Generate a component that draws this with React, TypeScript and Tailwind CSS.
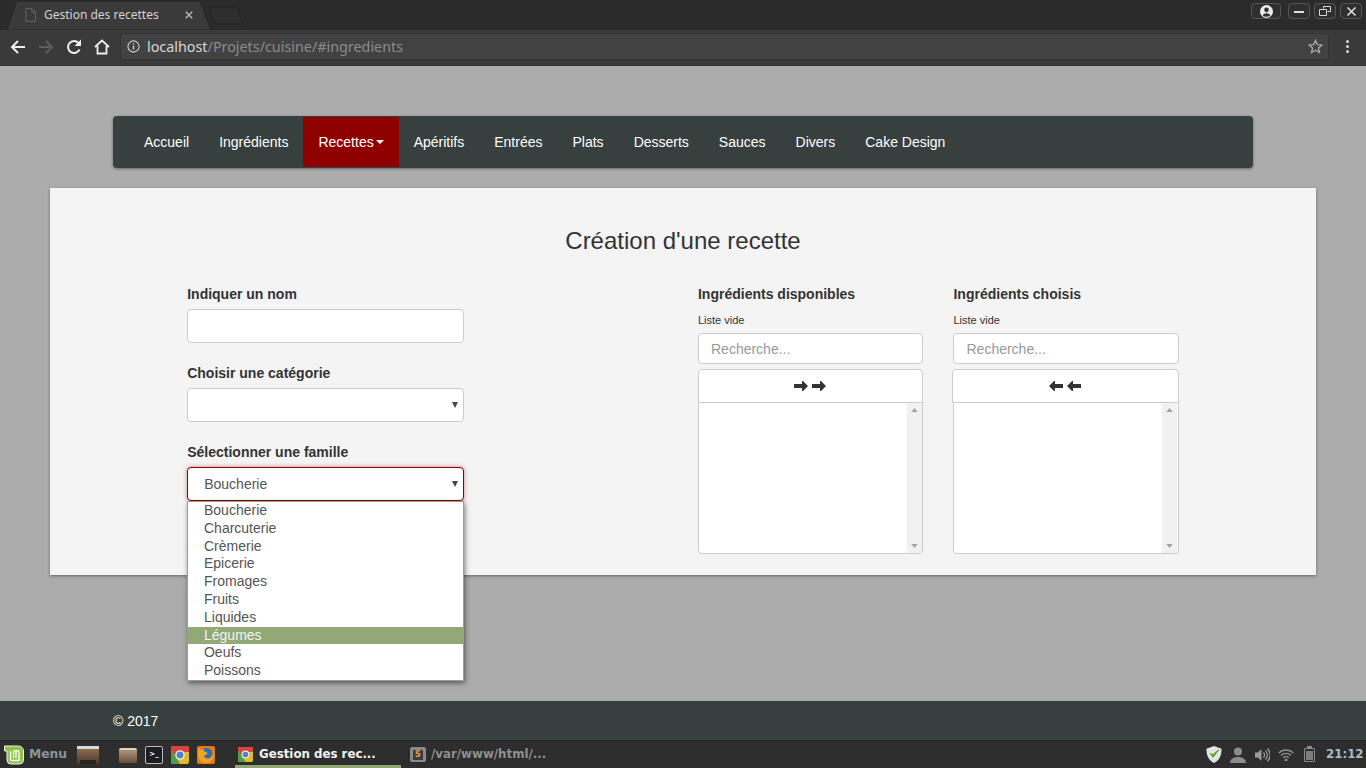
import React from "react";

const sans = "font-['Liberation_Sans',Arial,sans-serif]";

const NAV = ["Accueil", "Ingrédients", "Recettes", "Apéritifs", "Entrées", "Plats", "Desserts", "Sauces", "Divers", "Cake Design"];
const FAMILLES = ["Boucherie", "Charcuterie", "Crèmerie", "Epicerie", "Fromages", "Fruits", "Liquides", "Légumes", "Oeufs", "Poissons"];
const ROW_HEIGHTS = ["h-[18px]", "h-[18px]", "h-[17px]", "h-[18px]", "h-[18px]", "h-[18px]", "h-[18px]", "h-[17px]", "h-[18px]", "h-[18px]"];

const Caret = ({ className }: { className: string }) => (
  <svg viewBox="0 0 8 6" preserveAspectRatio="none" className={className} fill="currentColor">
    <path d="M0 0h8L4 6z" />
  </svg>
);

const TabStrip = () => (
  <div className="h-[30px] relative bg-[#2b2b2b] flex">
    <svg viewBox="0 0 240 30" className="absolute left-[5px] top-0 w-[240px] h-[30px]">
      <path d="M204 7 H232 L238 24 H210 Z" fill="#2e2e2e" stroke="#232323" strokeLinejoin="round" />
      <path d="M2 30 L11 3 Q12 1 14 1 L193 1 Q195 1 196 3 L206 30 Z" fill="#3a3a3a" stroke="#242424" />
    </svg>
    <div className="relative flex items-center h-full pl-[25px] w-[205px]">
      <svg viewBox="0 0 12 15" className="w-[11px] h-[14px] shrink-0" fill="none" stroke="#686868">
        <path d="M1 .5h6.500l4 4v10h-10.500zM7.500 .5v4h4" />
      </svg>
      <span className="ml-[8px] text-[12px] text-[#d2d2d2] font-['Noto_Sans',sans-serif]">Gestion des recettes</span>
      <svg viewBox="0 0 10 10" className="absolute left-[185px] top-[11px] w-[8px] h-[8px]" stroke="#b0b0b0" strokeWidth="2">
        <path d="M1 1l8 8M9 1l-8 8" />
      </svg>
    </div>
    <div className="ml-auto flex items-start gap-[4px] pt-[3px] pr-[4px]">
      <div className="mr-[3px] w-[30px] h-[16px] rounded-sm border border-[#555] bg-[#2f2f2f] flex items-center justify-center">
        <svg viewBox="0 0 14 14" className="w-[13px] h-[13px]">
          <circle cx="7" cy="7" r="7" fill="#ececec" />
          <circle cx="7" cy="5.200" r="2.500" fill="#2f2f2f" />
          <path d="M2.800 11a4.500 3.500 0 0 1 8.400 0a6 6 0 0 1-8.400 0z" fill="#2f2f2f" />
        </svg>
      </div>
      <div className="w-[22px] h-[16px] rounded-sm border border-[#555] bg-[#2f2f2f] flex items-center justify-center">
        <div className="w-[10px] h-[2px] bg-[#e0e0e0] mt-[2px]" />
      </div>
      <div className="w-[22px] h-[16px] rounded-sm border border-[#555] bg-[#2f2f2f] flex items-center justify-center">
        <svg viewBox="0 0 12 10" className="w-[12px] h-[10px]" fill="none" stroke="#d8d8d8">
          <path d="M4.500 2.500v-2h7v5h-3M.5 3.500h7v6h-7z" />
        </svg>
      </div>
      <div className="w-[22px] h-[16px] rounded-sm border border-[#555] bg-[#2f2f2f] flex items-center justify-center">
        <svg viewBox="0 0 10 10" className="w-[9px] h-[9px]" stroke="#e4e4e4" strokeWidth="1.600">
          <path d="M.5 .5l9 9M9.500 .5l-9 9" />
        </svg>
      </div>
    </div>
  </div>
);

const Toolbar = () => (
  <div className="h-[36px] bg-[#3a3a3a] flex items-center border-b border-[#333] pb-[2px]">
    <svg viewBox="0 0 16 16" className="ml-[10px] w-[16px] h-[16px]" fill="none" stroke="#efefef" strokeWidth="2">
      <path d="M15 8H2M8 2L2 8l6 6" />
    </svg>
    <svg viewBox="0 0 16 16" className="ml-[12px] w-[16px] h-[16px]" fill="none" stroke="#5e5e5e" strokeWidth="2">
      <path d="M1 8h13M8 2l6 6-6 6" />
    </svg>
    <svg viewBox="0 0 16 16" className="ml-[12px] w-[16px] h-[16px]" fill="none" stroke="#efefef" strokeWidth="2">
      <path d="M13.500 10.500A6 6 0 1 1 12.500 4" />
      <path d="M15 .5v6.500H8.500z" fill="#efefef" stroke="none" />
    </svg>
    <svg viewBox="0 0 16 16" className="ml-[12px] w-[16px] h-[16px]" fill="none" stroke="#efefef" strokeWidth="1.800">
      <path d="M1 8l7-6.500L15 8M3.500 7v7.500h9V7" />
    </svg>
    <div className="ml-[10px] w-[1209px] h-[27px] rounded-[3px] bg-[#424242] border border-[#333] flex items-center pl-[6px]">
      <svg viewBox="0 0 14 14" className="w-[13px] h-[13px] shrink-0" fill="none" stroke="#d0d0d0" strokeWidth="1.200">
        <circle cx="7" cy="7" r="6" />
        <path d="M7 6v4.200M7 3.500v1.300" strokeWidth="1.500" />
      </svg>
      <span className="ml-[7px] text-[14.33px] font-['Noto_Sans',sans-serif] text-[#d7d7d7]">
        localhost<span className="text-[#8b8b8b]">/Projets/cuisine/#ingredients</span>
      </span>
      <svg viewBox="0 0 16 16" className="ml-auto mr-[5px] w-[15px] h-[15px]" fill="none" stroke="#a8a8a8" strokeWidth="1.400">
        <path d="M8 1.500l2 4.400 4.800.5-3.600 3.200 1 4.700L8 11.900l-4.200 2.400 1-4.700L1.200 6.400 6 5.900z" />
      </svg>
    </div>
    <div className="ml-[17px] flex flex-col gap-[2px]">
      <div className="w-[3px] h-[3px] bg-[#d6d6d6] rounded-full" />
      <div className="w-[3px] h-[3px] bg-[#d6d6d6] rounded-full" />
      <div className="w-[3px] h-[3px] bg-[#d6d6d6] rounded-full" />
    </div>
  </div>
);

const NavBar = () => (
  <nav className="mx-[113px] mt-[50px] h-[52px] rounded-[4px] bg-[#373f3f] shadow-[0_1px_3px_rgba(0,0,0,0.4)] flex pl-[16px] pt-px pb-px text-[14px] text-white">
    {NAV.map((item) =>
      item === "Recettes" ? (
        <div key={item} className="px-[15px] bg-[#8f0000] flex items-center">
          {item}
          <Caret className="ml-[2px] w-[8px] h-[4px] text-white" />
        </div>
      ) : (
        <div key={item} className="px-[15px] flex items-center">{item}</div>
      )
    )}
  </nav>
);

const SelectBox = ({ value, focused }: { value?: string; focused?: boolean }) => (
  <div
    className={
      focused
        ? "h-[34px] rounded-[4px] bg-white border border-[#8f0000] shadow-[0_0_4px_rgba(143,0,0,0.45)] flex items-center pl-[16px] pr-[5px] text-[14px] text-[#555]"
        : "h-[34px] rounded-[4px] bg-white border border-[#ccc] flex items-center pl-[16px] pr-[5px] text-[14px] text-[#555]"
    }
  >
    {value}
    <Caret className="ml-auto w-[6px] h-[6px] text-[#444]" />
  </div>
);

const Arrow = ({ dir }: { dir: "in" | "out" }) => (
  <svg viewBox="0 0 14 10" className="w-[14px] h-[10px]" fill="#333">
    {dir === "in" ? (
      <path d="M0 3h8V0h1l5 5-5 5H8V7H0z" />
    ) : (
      <path d="M14 3H6V0H5L0 5l5 5h1V7h8z" />
    )}
  </svg>
);

const DualList = ({ title, dir, btnClass, barClass }: { title: string; dir: "in" | "out"; btnClass: string; barClass: string }) => (
  <div className="w-full">
    <label className="block h-[20px] leading-[20px] text-[14px] font-bold text-[#333]">{title}</label>
    <div className="mt-[7px] h-[19px] leading-[19px] text-[11px] text-[#333]">Liste vide</div>
    <div className="mt-[3px] h-[31px] rounded-[4px] bg-white border border-[#ccc] flex items-center pl-[12px] pt-px text-[14px] text-[#999]">
      Recherche...
    </div>
    <div className={btnClass}>
      <Arrow dir={dir} />
      <Arrow dir={dir} />
    </div>
    <div className="h-[151px] rounded-b-[4px] bg-white border border-t-0 border-[#ccc] flex justify-end">
      <div className={barClass}>
        <svg viewBox="0 0 8 5" className="w-[7px] h-[4px]" fill="#a3a3a3"><path d="M4 0l4 5H0z" /></svg>
        <svg viewBox="0 0 8 5" className="w-[7px] h-[4px]" fill="#a3a3a3"><path d="M0 0h8L4 5z" /></svg>
      </div>
    </div>
  </div>
);

const Panel = () => (
  <section className="relative mx-[50px] mt-[20px] h-[387px] bg-[#f4f4f4] shadow-[0_1px_3px_rgba(0,0,0,0.4)] pt-[36px]">
    <h1 className="text-center text-[24px] leading-[34px] text-[#333]">Création d'une recette</h1>
    <div className="mt-[26px] ml-[137.200px] flex">
      <div className="w-[277px]">
        <label className="block h-[20px] leading-[20px] text-[14px] font-bold text-[#333]">Indiquer un nom</label>
        <div className="mt-[5px] h-[34px] rounded-[4px] bg-white border border-[#ccc]" />
        <label className="block mt-[20px] h-[20px] leading-[20px] text-[14px] font-bold text-[#333]">Choisir une catégorie</label>
        <div className="mt-[5px]"><SelectBox /></div>
        <label className="block mt-[20px] h-[20px] leading-[20px] text-[14px] font-bold text-[#333]">Sélectionner une famille</label>
        <div className="mt-[5px] relative">
          <SelectBox value="Boucherie" focused />
          <ul className="absolute left-0 right-0 top-[34px] z-10 h-[180px] bg-white border border-[#9aa08e] shadow-[1px_2px_5px_rgba(0,0,0,0.5)] text-[14px] text-[#555]">
            {FAMILLES.map((f, i) => (
              <li
                key={f}
                className={
                  f === "Légumes"
                    ? `${ROW_HEIGHTS[i]} leading-[17px] pl-[15.800px] bg-[#92a876] text-[#f4f4f4]`
                    : `${ROW_HEIGHTS[i]} leading-[17px] pl-[15.800px]`
                }
              >
                {f}
              </li>
            ))}
          </ul>
        </div>
      </div>
      <div className="ml-[233.800px] w-[225px]">
        <DualList
          title="Ingrédients disponibles"
          dir="in"
          btnClass="mt-[5px] h-[34px] rounded-t-[4px] bg-white border border-[#ccc] flex items-center justify-center gap-[4px]"
          barClass="w-[15px] h-full bg-[#f1f1f1] flex flex-col items-center justify-between py-[5px]"
        />
      </div>
      <div className="ml-[30.500px] w-[225.500px]">
        <DualList
          title="Ingrédients choisis"
          dir="out"
          btnClass="mt-[5px] -ml-[1.500px] h-[34px] rounded-t-[4px] bg-white border border-[#ccc] flex items-center justify-center gap-[4px]"
          barClass="w-[15px] mr-px h-full bg-[#f1f1f1] flex flex-col items-center justify-between py-[5px]"
        />
      </div>
    </div>
  </section>
);

const ChromeLogo = ({ className }: { className: string }) => (
  <svg viewBox="0 0 18 18" className={className}>
    <rect width="18" height="18" fill="#e2b92e" rx="2" />
    <path d="M0 2a2 2 0 0 1 2-2h14a2 2 0 0 1 2 2v4H9L5 11 0 5z" fill="#d8443a" />
    <path d="M0 5l5 6 4 7H2a2 2 0 0 1-2-2z" fill="#4aa04a" />
    <circle cx="9" cy="9" r="4.800" fill="#ececec" />
    <circle cx="9" cy="9" r="3.400" fill="#4a86c8" />
  </svg>
);

const Taskbar = () => (
  <div className="h-[28px] bg-[#2d2d2d] border-t border-[#222] flex items-center font-['DejaVu_Sans',sans-serif] text-[11.800px] font-bold">
    <svg viewBox="0 0 20 20" className="ml-[4px] w-[20px] h-[20px] shrink-0">
      <path d="M.5 1h14a5 5 0 0 1 5 5v9a4 4 0 0 1-4 4H7a4 4 0 0 1-4-4V6H.5z" fill="#8fc449" stroke="#eef3e4" strokeWidth="1" />
      <path d="M6.500 6v8a1.500 1.500 0 0 0 1.500 1.500h7V7a1.500 1.500 0 0 0-3 0v6M9.500 13V7a1.500 1.500 0 0 1 2.500-1" fill="none" stroke="#fff" strokeWidth="1.300" />
    </svg>
    <span className="ml-[5px] w-[37px] whitespace-nowrap text-[12.300px] text-[#8a949c]">Menu</span>
    <div className="ml-[11px] w-[22px] h-[18px] bg-gradient-to-b from-[#8a6a50] to-[#4d3a2c] border-t-[3px] border-[#d8d8d8] flex items-end justify-center">
      <div className="w-[16px] h-[4px] bg-[#2c2420]" />
    </div>
    <div className="ml-[20px] w-[18px] h-[15px] mt-[2px] rounded-[2px] bg-gradient-to-b from-[#b09478] to-[#6b503c] border-t-2 border-[#d8d4cc]" />
    <div className="ml-[8px] w-[18px] h-[18px] rounded-[2px] bg-[#1c1c24] border border-[#bbb] flex items-center justify-center text-[7px] leading-none text-white">&gt;_</div>
    <ChromeLogo className="ml-[8px] w-[18px] h-[18px] shrink-0" />
    <svg viewBox="0 0 18 18" className="ml-[8px] w-[18px] h-[18px] shrink-0">
      <rect width="18" height="18" rx="2" fill="#e27a1c" />
      <circle cx="9.500" cy="8" r="6" fill="#2c6fb0" />
      <path d="M2 2c1 2 3 2 5 1-1 2 1 3 3 3 1 2-1 4-3 3 0 3 4 5 7 2 1-1 2-3 2-5 2 5-1 11-7 11-5 0-8-4-8-8 0-3 0-5 1-7z" fill="#f0a324" />
    </svg>
    <div className="ml-[20px] w-[166px] h-full flex items-center pl-[3px] pt-[3px] border-b-[3px] border-[#91a574] shrink-0">
      <ChromeLogo className="w-[15px] h-[15px] shrink-0" />
      <span className="ml-[6px] whitespace-nowrap text-[#f2f2f2]">Gestion des rec...</span>
    </div>
    <div className="ml-[9px] w-[16px] h-[15px] bg-[#8a8a8a] rounded-[2px] flex items-center justify-center shrink-0">
      <div className="w-[10px] h-[10px] bg-[#3c3c3c] text-[8px] leading-[10px] text-center text-[#e29a4a]">S</div>
    </div>
    <span className="ml-[5px] whitespace-nowrap text-[#8f8f8f]">/var/www/html/...</span>
    <div className="ml-auto flex items-center">
      <svg viewBox="0 0 16 18" className="w-[16px] h-[17px]">
        <path d="M8 0l8 3c0 7-2 12-8 15C2 15 0 10 0 3z" fill="#e4e4e4" />
        <path d="M4 8l3 4 6-8-6 5z" fill="#5da02c" stroke="#5da02c" strokeWidth="1" />
      </svg>
      <svg viewBox="0 0 16 16" className="ml-[8px] w-[16px] h-[16px]" fill="#8c8c8c">
        <circle cx="8" cy="4.500" r="4" />
        <path d="M0 16c0-4 3-5 6-6h4c3 1 6 2 6 6z" />
      </svg>
      <svg viewBox="0 0 16 16" className="ml-[8px] w-[16px] h-[16px]" fill="none" stroke="#9a9a9a" strokeWidth="1.300">
        <path d="M1 5.500h3l3.500-3.500v12L4 10.500H1z" fill="#9a9a9a" stroke="none" />
        <path d="M9.500 5.500a3.500 3.500 0 0 1 0 5M11.500 3.500a6.500 6.500 0 0 1 0 9M13.500 1.500a9.500 9.500 0 0 1 0 13" />
      </svg>
      <svg viewBox="0 0 16 12" className="ml-[8px] w-[16px] h-[12px]" fill="none" stroke="#8e8e8e" strokeWidth="1.400">
        <path d="M.8 4a10 10 0 0 1 14.400 0M3 6.500a7 7 0 0 1 10 0M5.300 8.800a3.800 3.800 0 0 1 5.400 0" />
        <circle cx="8" cy="11" r=".8" fill="#8e8e8e" />
      </svg>
      <div className="ml-[10px] mt-px relative w-[11px] h-[14px] rounded-[1px] border border-[#8c8c8c] flex items-end p-px">
        <div className="absolute -top-[3px] left-[2px] w-[5px] h-[2px] bg-[#8c8c8c]" />
        <div className="w-full h-[9px] bg-[#7e7e7e]" />
      </div>
      <span className="ml-[11px] mr-[3px] w-[37px] whitespace-nowrap text-[#a9bccb]">21:12</span>
    </div>
  </div>
);

export default function App() {
  return (
    <div className={`w-[1366px] h-[768px] overflow-hidden flex flex-col bg-[#acacac] ${sans}`}>
      <TabStrip />
      <Toolbar />
      <NavBar />
      <Panel />
      <footer className="mt-auto h-[39px] bg-[#373f3f] pl-[113px] pt-[2px] flex items-center text-[14px] text-white">© 2017</footer>
      <Taskbar />
    </div>
  );
}
